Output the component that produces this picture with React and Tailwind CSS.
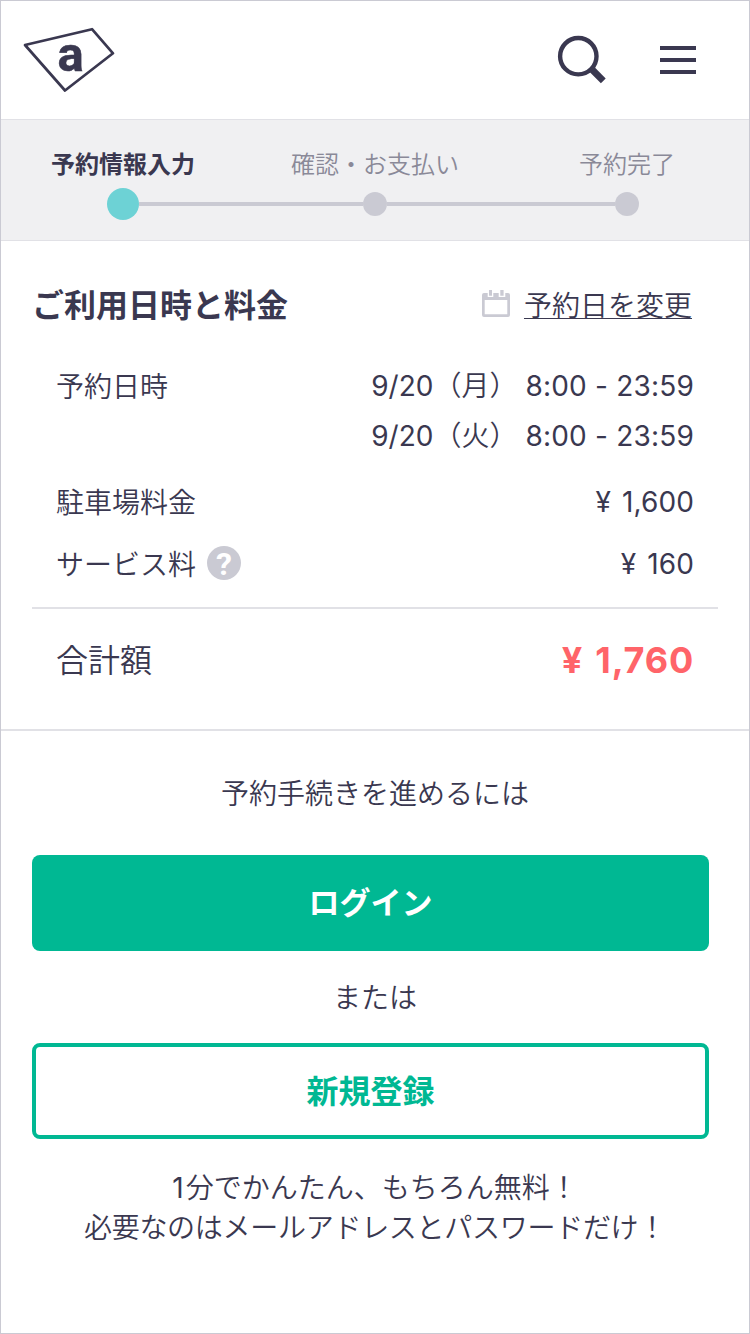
import React from "react";
import clsx from "clsx";

const STEPS = [
  { label: "予約情報入力", active: true },
  { label: "確認・お支払い", active: false },
  { label: "予約完了", active: false },
];

const DATES = [
  { date: "9/20", day: "（月）", time: "8:00 - 23:59" },
  { date: "9/20", day: "（火）", time: "8:00 - 23:59" },
];

function Logo() {
  return (
    <svg width="94" height="68" viewBox="0 0 94 68" fill="none" aria-label="a">
      <path
        d="M3 19L70 3.2L91 27.3L43 64.5Z"
        stroke="#3a3850"
        strokeWidth="2.7"
        strokeLinejoin="round"
      />
      <text
        x="48.5"
        y="44.8"
        textAnchor="middle"
        fill="#3a3850"
        stroke="#3a3850"
        strokeWidth="0.5"
        className="font-['Roboto'] text-[49px] font-bold"
      >
        a
      </text>
    </svg>
  );
}

function SearchIcon() {
  return (
    <svg width="50" height="50" viewBox="0 0 50 50" fill="none" aria-hidden="true">
      <circle cx="21.3" cy="21.2" r="18.2" stroke="#3a3850" strokeWidth="4.4" />
      <path d="M34 33.5L46.3 45.8" stroke="#3a3850" strokeWidth="6.8" />
    </svg>
  );
}

function CalendarIcon() {
  return (
    <svg width="28" height="28" viewBox="0 0 28 28" aria-hidden="true">
      <path
        d="M2 3H5.7V7H11.3V3H16.7V7H23.3V3H26Q28 3 28 5V25Q28 27 26 27H2Q0 27 0 25V5Q0 3 2 3ZM2.7 10V24.2H25.3V10Z"
        fill="#cacad3"
        fillRule="evenodd"
      />
      <path d="M7 0H10V5.7H7ZM18.3 0H21.6V5.7H18.3Z" fill="#cacad3" />
    </svg>
  );
}

function HelpIcon() {
  return (
    <span className="mb-0.5 flex h-[34px] w-[34px] items-center justify-center rounded-full bg-[#cacad3] pt-0.5 font-['Roboto'] text-[32px] font-bold leading-none text-white">
      ?
    </span>
  );
}

function Row({ label, value, help }) {
  return (
    <div className="flex h-[62px] items-center justify-between">
      <dt className="flex items-center gap-[11px]">
        <span className="pt-0.5">{label}</span>
        {help && <HelpIcon />}
      </dt>
      <dd className="font-normal tracking-[0.1px] [word-spacing:3px]">{value}</dd>
    </div>
  );
}

export default function App() {
  return (
    <div className="h-[1334px] w-[750px] border border-[#cacad3] bg-white font-['Inter','Noto_Sans_CJK_JP',sans-serif] text-[28px] font-[350] text-[#3a3850]">
      {/* Header */}
      <header className="flex h-[119px] items-center justify-between border-b border-[#e1e1e6] pr-[53px] pl-[21px]">
        <Logo />
        <div className="flex items-center gap-[53px]">
          <button aria-label="検索">
            <SearchIcon />
          </button>
          <button aria-label="メニュー" className="flex w-9 flex-col gap-2">
            <span className="h-1 bg-[#3a3850]" />
            <span className="h-1 bg-[#3a3850]" />
            <span className="h-1 bg-[#3a3850]" />
          </button>
        </div>
      </header>

      {/* Booking steps */}
      <nav className="h-[121px] border-b border-[#e1e1e6] bg-[#f0f0f2] pt-[25px]">
        <ol className="flex justify-between px-[21px] text-2xl">
          {STEPS.map((step) => (
            <li
              key={step.label}
              className={clsx(
                "w-[202px] text-center leading-10",
                step.active ? "font-bold" : "text-[#8a8998]"
              )}
            >
              {step.label}
            </li>
          ))}
        </ol>
        <div className="mt-[3px] flex items-center pr-[110px] pl-[106px]">
          <span className="size-8 rounded-full bg-[#6dd2d5]" />
          <span className="h-1 flex-1 bg-[#cacad3]" />
          <span className="size-6 rounded-full bg-[#cacad3]" />
          <span className="h-1 w-[228px] bg-[#cacad3]" />
          <span className="size-6 rounded-full bg-[#cacad3]" />
        </div>
      </nav>

      {/* Date and price */}
      <section className="border-b-2 border-[#e1e1e6] pt-10 pb-[18px] pl-[31px]">
        <div className="flex h-12 items-center justify-between pr-[57px]">
          <h1 className="pt-0.5 text-[32px] leading-none font-bold">
            ご利用日時と料金
          </h1>
          <a href="#" className="flex items-center gap-[14px]">
            <span className="pb-0.5">
              <CalendarIcon />
            </span>
            <span className="pt-0.5 underline decoration-1 underline-offset-2">
              予約日を変更
            </span>
          </a>
        </div>

        <dl className="mt-8 pr-[55px] pl-6">
          <div className="mb-[10px] flex h-[100px] justify-between leading-[50px]">
            <dt className="pt-px">予約日時</dt>
            <dd className="font-normal">
              {DATES.map(({ date, day, time }) => (
                <p key={day} className="flex justify-end">
                  <span>{date}</span>
                  <span className="font-[350]">{day}</span>
                  <span className="ml-2 tracking-[0.2px]">{time}</span>
                </p>
              ))}
            </dd>
          </div>
          <Row label="駐車場料金" value="¥ 1,600" />
          <Row label="サービス料" value="¥ 160" help />
        </dl>

        <div className="mt-3 mr-[31px] h-0.5 bg-[#e1e1e6]" />

        <div className="flex h-[102px] items-center justify-between pr-[55px] pl-6">
          <span className="pt-px text-[32px]">合計額</span>
          <span className="pb-px text-[36px] font-bold tracking-[0.8px] text-[#ff6469] [word-spacing:3px]">
            ¥ 1,760
          </span>
        </div>
      </section>

      {/* Login / sign up */}
      <section className="pt-[42px] text-center">
        <p className="leading-[42px]">予約手続きを進めるには</p>
        <button className="mt-10 mr-[9px] h-24 w-[677px] rounded-lg bg-[#00b893] pt-px text-[31px] font-bold text-white">
          ログイン
        </button>
        <p className="pt-0.5 leading-[90px]">または</p>
        <button className="mr-[9px] h-24 w-[677px] rounded-lg border-4 border-[#00b893] pt-0.5 text-[32px] font-bold text-[#00b893]">
          新規登録
        </button>
        <p className="mt-[29px] leading-10">
          <span className="mr-0.5 font-normal">1</span>分でかんたん、もちろん無料！
        </p>
        <p className="leading-10 tracking-[-0.28px]">
          必要なのはメールアドレスとパスワードだけ！
        </p>
      </section>
    </div>
  );
}
